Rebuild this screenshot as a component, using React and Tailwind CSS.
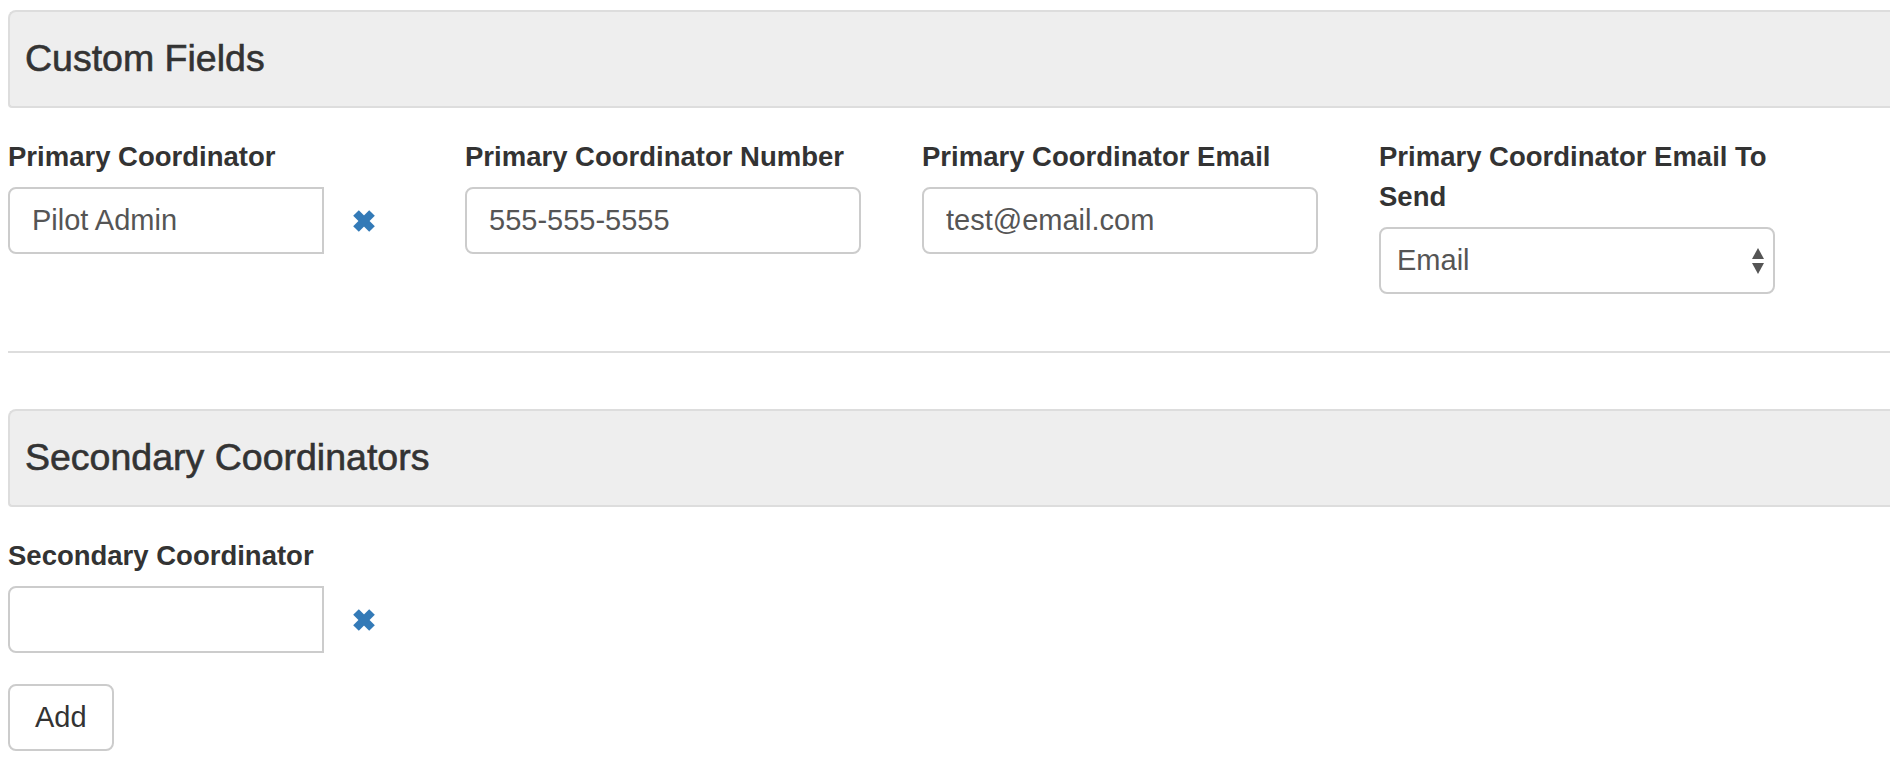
const XIcon = () => (
  <svg width="24" height="24" viewBox="0 0 24 24" className="text-[#337ab7]">
    <line x1="4" y1="4" x2="20" y2="20" stroke="currentColor" strokeWidth="8" />
    <line x1="20" y1="4" x2="4" y2="20" stroke="currentColor" strokeWidth="8" />
  </svg>
);

const SectionHeader = ({ title }) => (
  <div className="flex h-[98px] items-center rounded-tl-lg rounded-bl-sm border-y-2 border-l-2 border-[#dddddd] bg-[#eeeeee] pl-[15px]">
    <h3 className="text-[37.5px] leading-none text-[#333333] [-webkit-text-stroke:0.6px_#333333]">{title}</h3>
  </div>
);

const Label = ({ children }) => (
  <label className="mb-[10px] block text-[27.5px] font-bold leading-[40px] text-[#333333]">{children}</label>
);

const inputClass =
  'h-[67px] border-2 border-[#cccccc] bg-white px-[22px] text-[29px] text-[#555555] outline-none';

const CoordinatorInput = ({ value }) => (
  <div className="flex w-[396px] items-center">
    <input readOnly value={value} className={`${inputClass} w-[316px] rounded-l-lg`} />
    <div className="flex flex-1 items-center justify-center">
      <XIcon />
    </div>
  </div>
);

const App = () => {
  return (
    <div className="min-h-[766px] w-full overflow-hidden bg-white pl-2 pt-[10px] font-['Liberation_Sans',Arial,sans-serif]">
      <SectionHeader title="Custom Fields" />

      <div className="mt-[29px] grid grid-cols-[396px_396px_396px_396px] gap-x-[61px]">
        <div>
          <Label>Primary Coordinator</Label>
          <CoordinatorInput value="Pilot Admin" />
        </div>
        <div>
          <Label>Primary Coordinator Number</Label>
          <input readOnly value="555-555-5555" className={`${inputClass} w-full rounded-lg`} />
        </div>
        <div>
          <Label>Primary Coordinator Email</Label>
          <input readOnly value="test@email.com" className={`${inputClass} w-full rounded-lg`} />
        </div>
        <div>
          <Label>Primary Coordinator Email To Send</Label>
          <div className="flex h-[67px] w-full items-center justify-between rounded-lg border-2 border-[#cccccc] bg-white pl-[16px] pr-[8px] text-[29px] text-[#555555]">
            <span>Email</span>
            <svg width="14" height="28" viewBox="0 0 14 28" className="text-[#555555]">
              <path d="M7 1 L13 12 L1 12 Z" fill="currentColor" />
              <path d="M1 16 L13 16 L7 27 Z" fill="currentColor" />
            </svg>
          </div>
        </div>
      </div>

      <hr className="mt-[57px] border-0 border-t-2 border-[#dddddd]" />

      <div className="mt-[56px]">
        <SectionHeader title="Secondary Coordinators" />
      </div>

      <div className="mt-[29px]">
        <Label>Secondary Coordinator</Label>
        <CoordinatorInput value="" />
      </div>

      <button
        type="button"
        className="mt-[31px] h-[67px] rounded-lg border-2 border-[#cccccc] bg-white px-[25px] text-[29px] text-[#333333]"
      >
        Add
      </button>
    </div>
  );
};

export default App;
